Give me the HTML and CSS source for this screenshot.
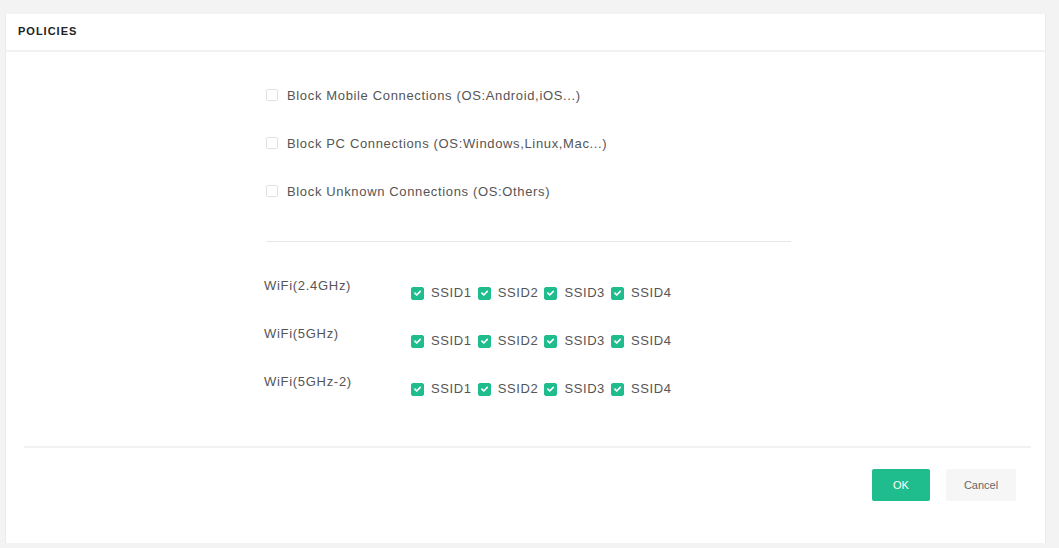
FILE: index.html
```html
<!DOCTYPE html>
<html lang="en">
<head>
<meta charset="utf-8">
<title>Policies</title>
<link rel="stylesheet" href="styles.css">
</head>
<body>
<div class="panel">
  <div class="panel-head">POLICIES</div>
  <div class="panel-body">
    <div class="content">
      <div class="policies">
        <label class="policy"><span class="box"></span>Block Mobile Connections (OS:Android,iOS...)</label>
        <label class="policy"><span class="box"></span>Block PC Connections (OS:Windows,Linux,Mac...)</label>
        <label class="policy"><span class="box"></span>Block Unknown Connections (OS:Others)</label>
      </div>
      <div class="divider"></div>
      <div class="bands">
        <div class="band">
          <div class="band-name">WiFi(2.4GHz)</div>
          <div class="ssids">
            <span class="ssid"><span class="box on"><svg viewBox="0 0 12 12"><path d="M3.2 6.2l2 2 3.8-4"/></svg></span>SSID1</span>
            <span class="ssid"><span class="box on"><svg viewBox="0 0 12 12"><path d="M3.2 6.2l2 2 3.8-4"/></svg></span>SSID2</span>
            <span class="ssid"><span class="box on"><svg viewBox="0 0 12 12"><path d="M3.2 6.2l2 2 3.8-4"/></svg></span>SSID3</span>
            <span class="ssid"><span class="box on"><svg viewBox="0 0 12 12"><path d="M3.2 6.2l2 2 3.8-4"/></svg></span>SSID4</span>
          </div>
        </div>
        <div class="band">
          <div class="band-name">WiFi(5GHz)</div>
          <div class="ssids">
            <span class="ssid"><span class="box on"><svg viewBox="0 0 12 12"><path d="M3.2 6.2l2 2 3.8-4"/></svg></span>SSID1</span>
            <span class="ssid"><span class="box on"><svg viewBox="0 0 12 12"><path d="M3.2 6.2l2 2 3.8-4"/></svg></span>SSID2</span>
            <span class="ssid"><span class="box on"><svg viewBox="0 0 12 12"><path d="M3.2 6.2l2 2 3.8-4"/></svg></span>SSID3</span>
            <span class="ssid"><span class="box on"><svg viewBox="0 0 12 12"><path d="M3.2 6.2l2 2 3.8-4"/></svg></span>SSID4</span>
          </div>
        </div>
        <div class="band">
          <div class="band-name">WiFi(5GHz-2)</div>
          <div class="ssids">
            <span class="ssid"><span class="box on"><svg viewBox="0 0 12 12"><path d="M3.2 6.2l2 2 3.8-4"/></svg></span>SSID1</span>
            <span class="ssid"><span class="box on"><svg viewBox="0 0 12 12"><path d="M3.2 6.2l2 2 3.8-4"/></svg></span>SSID2</span>
            <span class="ssid"><span class="box on"><svg viewBox="0 0 12 12"><path d="M3.2 6.2l2 2 3.8-4"/></svg></span>SSID3</span>
            <span class="ssid"><span class="box on"><svg viewBox="0 0 12 12"><path d="M3.2 6.2l2 2 3.8-4"/></svg></span>SSID4</span>
          </div>
        </div>
      </div>
    </div>
  </div>
  <div class="panel-foot">
    <button class="btn btn-ok">OK</button>
    <button class="btn btn-cancel">Cancel</button>
  </div>
</div>
</body>
</html>
```

FILE: styles.css
```css
* { box-sizing: border-box; }

html, body {
  margin: 0;
  padding: 0;
}

body {
  width: 1059px;
  height: 548px;
  background: #f3f3f3;
  font-family: "Liberation Sans", Arial, sans-serif;
  color: #555;
  overflow: hidden;
}

.panel {
  margin: 14px 0 0 5px;
  width: 1041px;
  height: 529px;
  background: #fff;
  border-left: 1px solid #ececec;
  border-right: 1px solid #ececec;
  display: flex;
  flex-direction: column;
}

.panel-head {
  height: 38px;
  padding: 11px 0 0 12px;
  font-size: 11px;
  font-weight: bold;
  color: #222;
  letter-spacing: 1px;
  border-bottom: 2px solid #f2f2f2;
}

.panel-body {
  display: flex;
  justify-content: center;
  padding-left: 4px;
}

.content {
  width: 527px;
}

.policies {
  display: flex;
  flex-direction: column;
  gap: 30px;
  padding-top: 34px;
  padding-left: 2px;
}

.policy {
  display: flex;
  align-items: center;
  height: 18px;
  font-size: 13px;
  letter-spacing: 0.65px;
  color: #555;
}

.box {
  width: 12px;
  height: 12px;
  flex: none;
  border: 1px solid #e2e2e2;
  border-radius: 2px;
  background: #fff;
  margin-right: 9px;
  display: inline-flex;
  align-items: center;
  justify-content: center;
}

.box.on {
  width: 13px;
  height: 13px;
  background: #1fbd8d;
  border-color: #1fbd8d;
  margin-right: 7px;
}

.box svg {
  width: 12px;
  height: 12px;
}

.box svg path {
  fill: none;
  stroke: #fff;
  stroke-width: 1.8;
  stroke-linecap: round;
  stroke-linejoin: round;
}

.divider {
  height: 1px;
  background: #e6e6e6;
  margin: 41px 0 0 2px;
}

.bands {
  display: flex;
  flex-direction: column;
  gap: 30px;
  padding-top: 35px;
}

.band {
  display: flex;
  align-items: flex-start;
  height: 18px;
}

.band-name {
  width: 147px;
  font-size: 13px;
  letter-spacing: 0.7px;
  color: #555;
  line-height: 18px;
}

.ssids {
  display: flex;
  padding-top: 7px;
}

.ssid {
  display: inline-flex;
  align-items: center;
  width: 66.7px;
  font-size: 13px;
  letter-spacing: 0.6px;
  color: #555;
  line-height: 18px;
}

.panel-foot {
  margin: auto 14px 0 18px;
  border-top: 2px solid #f2f2f2;
  height: 97px;
  display: flex;
  justify-content: flex-end;
  align-items: flex-start;
  padding: 21px 15px 0 0;
  gap: 16px;
}

.btn {
  height: 32px;
  border: none;
  border-radius: 2px;
  font-family: "Liberation Sans", Arial, sans-serif;
  font-size: 11px;
  cursor: pointer;
}

.btn-ok {
  width: 58px;
  background: #1fbd8d;
  color: #fff;
}

.btn-cancel {
  width: 70px;
  background: #f6f6f6;
  color: #666;
}
```
